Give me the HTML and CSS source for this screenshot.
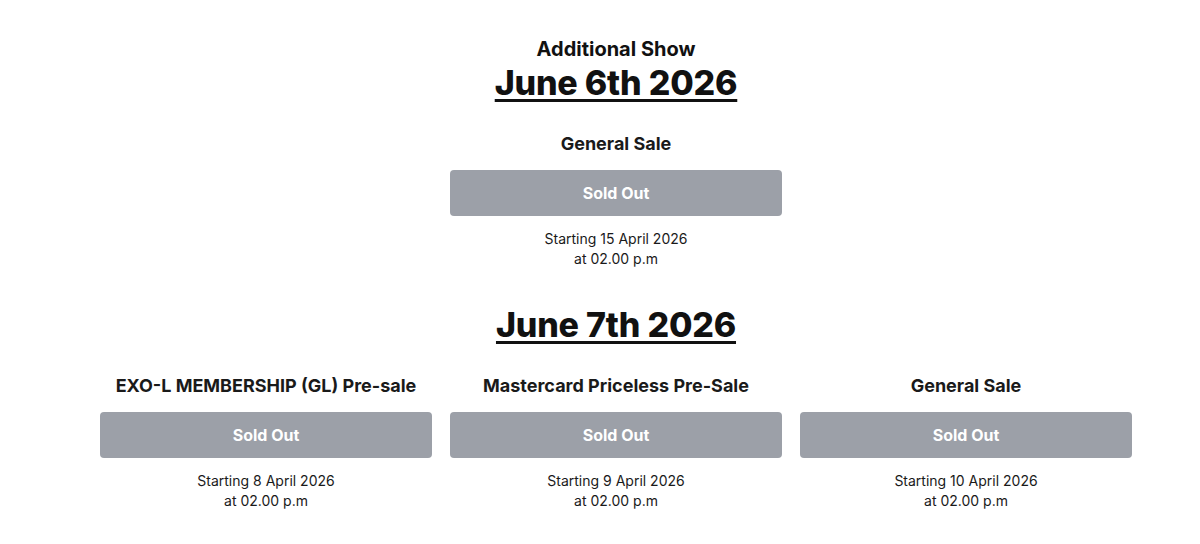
FILE: index.html
```html
<!DOCTYPE html>
<html>
<head>
<meta charset="utf-8">
<link rel="stylesheet" href="styles.css">
</head>
<body>
<main class="page">
  <section class="show">
    <div class="kicker">Additional Show</div>
    <h2 class="date">June 6th 2026</h2>
    <div class="grid single">
      <div class="col">
        <h3 class="sale">General Sale</h3>
        <div class="btn">Sold Out</div>
        <p class="when">Starting 15 April 2026<br>at 02.00 p.m</p>
      </div>
    </div>
  </section>
  <section class="show second">
    <h2 class="date">June 7th 2026</h2>
    <div class="grid">
      <div class="col">
        <h3 class="sale">EXO-L MEMBERSHIP (GL) Pre-sale</h3>
        <div class="btn">Sold Out</div>
        <p class="when">Starting 8 April 2026<br>at 02.00 p.m</p>
      </div>
      <div class="col">
        <h3 class="sale">Mastercard Priceless Pre-Sale</h3>
        <div class="btn">Sold Out</div>
        <p class="when">Starting 9 April 2026<br>at 02.00 p.m</p>
      </div>
      <div class="col">
        <h3 class="sale">General Sale</h3>
        <div class="btn">Sold Out</div>
        <p class="when">Starting 10 April 2026<br>at 02.00 p.m</p>
      </div>
    </div>
  </section>
</main>
</body>
</html>
```

FILE: styles.css
```css
html, body {
  margin: 0;
  padding: 0;
  background: #ffffff;
}
body {
  font-family: Inter, "Liberation Sans", sans-serif;
  color: #111111;
}
.page {
  width: 1032px;
  margin-left: 100px;
  padding-top: 37px;
  text-align: center;
}
.kicker {
  font-size: 20px;
  font-weight: 700;
  line-height: 24px;
}
.date {
  margin: 0;
  font-size: 34px;
  font-weight: 800;
  line-height: 44px;
  text-decoration: underline;
  text-decoration-thickness: 3px;
  text-underline-offset: 4px;
  letter-spacing: -0.2px;
}
.grid {
  display: grid;
  grid-template-columns: repeat(3, 332px);
  column-gap: 18px;
  margin-top: 27px;
}
.grid.single {
  grid-template-columns: 332px;
  justify-content: center;
}
.col {
  display: flex;
  flex-direction: column;
  align-items: stretch;
}
.sale {
  margin: 0;
  font-size: 18px;
  font-weight: 700;
  line-height: 24px;
  color: #1a1a1a;
}
.btn {
  margin-top: 14px;
  height: 46px;
  border-radius: 4px;
  background: #9ca0a8;
  color: #ffffff;
  font-size: 16px;
  font-weight: 700;
  line-height: 46px;
}
.when {
  margin: 13px 0 0;
  font-size: 14px;
  line-height: 20px;
  color: #1a1a1a;
}
.second {
  margin-top: 34px;
}
```
